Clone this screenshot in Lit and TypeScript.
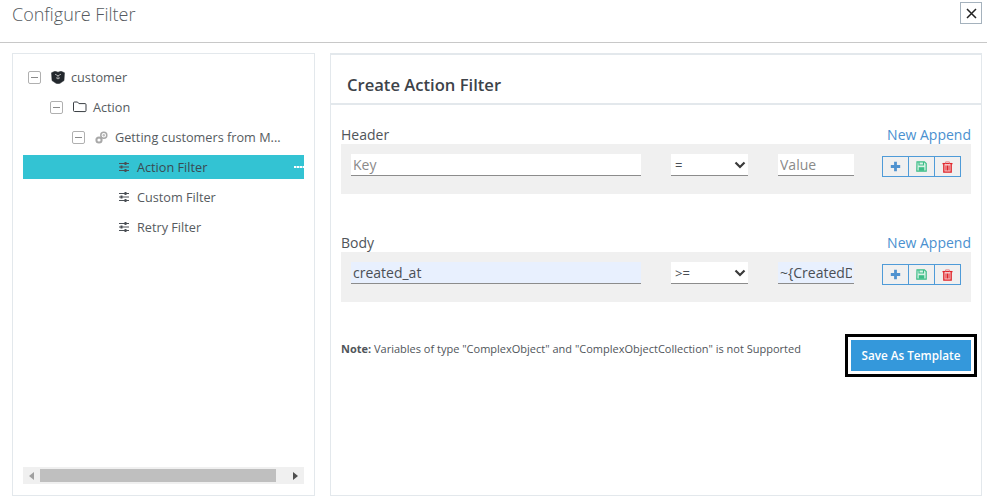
import { LitElement, html, css, svg } from "lit";
import { customElement } from "lit/decorators.js";

const sliders = svg`<svg class="ico" width="10" height="10" viewBox="0 0 10 10"><g fill="none" stroke="currentColor"><path d="M0 1.500h10M0 5h10M0 8.500h10" stroke-width="1"/><path d="M6.500 0v3M2.500 3.500v3M6.500 7v3" stroke-width="2"/></g></svg>`;

const tree = [
  { level: 0, toggle: true, icon: "box", label: "customer" },
  { level: 1, toggle: true, icon: "folder", label: "Action" },
  { level: 2, toggle: true, icon: "gears", label: "Getting customers from M..." },
  { level: 3, toggle: false, icon: "sliders", label: "Action Filter", selected: true },
  { level: 3, toggle: false, icon: "sliders", label: "Custom Filter" },
  { level: 3, toggle: false, icon: "sliders", label: "Retry Filter" },
];

function icon(name: string) {
  if (name === "box")
    return svg`<svg class="ico" width="14" height="13" viewBox="0 0 14 13"><path d="M7 1.200 10 .2 13.500 1.800 13 9.600 9 12.300 7 12.800 5 12.300 1 9.600.5 1.800 4 .2Z" fill="#23282d" stroke="#23282d" stroke-width=".5" stroke-linejoin="round"/><path d="M4 3.200 7 4.800 10 3.200M7 4.800v3M5 6.600l2 1.400 2-1.400" fill="none" stroke="#c8c8c8" stroke-width=".8"/></svg>`;
  if (name === "folder")
    return svg`<svg class="ico" width="14" height="12" viewBox="0 0 14 12"><path d="M1.500 10.500a1 1 0 0 1-1-1V2a1 1 0 0 1 1-1h3l1.400 1.600h6.100a1 1 0 0 1 1 1v6a1 1 0 0 1-1 1Z" fill="none" stroke="#3a3f44" stroke-width="1"/></svg>`;
  if (name === "gears")
    return svg`<svg class="ico" width="13" height="13" viewBox="0 0 13 13"><g fill="none" stroke="#a8a8a8"><circle cx="8.800" cy="4.200" r="3" stroke-width="1.500"/><circle cx="4" cy="9" r="2.600" stroke-width="2"/></g><circle cx="8.800" cy="4.200" r="1.200" fill="#bdbdbd"/></svg>`;
  return sliders;
}

const plus = svg`<svg width="11" height="11" viewBox="0 0 11 11"><path d="M5.500.8v9.400M.8 5.500h9.400" stroke="#4f92cf" stroke-width="2.800"/></svg>`;
const save = svg`<svg width="11" height="11" viewBox="0 0 11 11"><path d="M1 .8h7.400L10.200 2.600V10.200H.8Z" fill="#d9f2e6" stroke="#3dbd87" stroke-width="1.200"/><path d="M3 1v3h4.500V1" fill="none" stroke="#3dbd87" stroke-width="1.100"/><rect x="2.700" y="6.200" width="5.600" height="3.600" fill="#3dbd87"/></svg>`;
const trash = svg`<svg width="11" height="12" viewBox="0 0 11 12"><path d="M.5 2.600h10" stroke="#e0252b" stroke-width="1.300"/><path d="M3.600 2.400V.9h3.800v1.500" fill="none" stroke="#e8878a" stroke-width="1"/><path d="M1.800 3v8.200h7.400V3" fill="#f6c6c7" stroke="#e0252b" stroke-width="1.300"/><path d="M4 4.500v5M5.500 4.500v5M7 4.500v5" stroke="#e0252b" stroke-width="1"/></svg>`;

@customElement("app-root")
export class AppRoot extends LitElement {
  static styles = css`
    :host {
      display: block;
      width: 987px;
      height: 497px;
      overflow: hidden;
      background: #fff;
      font-family: "Open Sans", "Noto Sans", sans-serif;
      color: #4a4f55;
    }
    * { box-sizing: border-box; }
    .top {
      height: 43px;
      border-bottom: 1px solid #c8c8c8;
      display: flex;
      justify-content: space-between;
      align-items: flex-start;
      padding: 0 5px 0 12px;
    }
    .title {
      font-size: 18px;
      font-weight: 300;
      line-height: 28px;
      color: #555a60;
    }
    .close {
      margin-top: 2px;
      width: 22px;
      height: 22px;
      border: 1px solid #a5b2bd;
      background: #fff;
      display: flex;
      align-items: center;
      justify-content: center;
      padding: 0;
    }
    .main {
      display: flex;
      gap: 15px;
      padding: 10px 5px 0 12px;
      height: 453px;
      align-items: flex-start;
    }
    .left {
      width: 303px;
      flex: none;
      height: 443px;
      border: 1px solid #e3e8ec;
      padding: 11px 10px 11px 10px;
      display: flex;
      flex-direction: column;
      justify-content: space-between;
    }
    .tree { display: flex; flex-direction: column; gap: 6px; }
    .row {
      height: 24px;
      display: flex;
      align-items: center;
      font-size: 12.7px;
      color: #565b60;
      position: relative;
    }
    .row.l0 { padding-left: 5px; }
    .row.l1 { padding-left: 27px; }
    .row.l2 { padding-left: 49px; }
    .row.l3 { padding-left: 96px; }
    .row.selected { background: #33c3d3; color: #3a4a52; }
    .toggle {
      width: 13px;
      height: 13px;
      border: 1.5px solid #b0b0b0;
      border-radius: 2px;
      display: flex;
      align-items: center;
      justify-content: center;
      margin-right: 10px;
      flex: none;
    }
    .toggle::before { content: ""; width: 7px; height: 1px; background: #8a8a8a; }
    .icoWrap { width: 20px; flex: none; display: flex; align-items: center; }
    .l3 .icoWrap { width: 18px; }
    .ico { display: block; color: #4a4f55; }
    .dots {
      position: absolute;
      right: 0;
      top: 11px;
      width: 10px;
      height: 2px;
      background-image: linear-gradient(90deg, #fff 2px, rgba(255,255,255,.45) 1px);
      background-size: 3px 2px;
    }
    .hscroll {
      height: 17px;
      background: #f0f0f0;
      display: flex;
      align-items: center;
      padding: 0 6px;
    }
    .thumb { width: 236px; height: 13px; background: #bfbfbf; margin-left: 6px; }
    .arrL { width: 0; height: 0; border: 4px solid transparent; border-right: 5px solid #a0a0a0; border-left: 0; }
    .arrR { width: 0; height: 0; border: 4px solid transparent; border-left: 5px solid #4f4f4f; border-right: 0; margin-left: auto; }
    .right {
      width: 652px;
      flex: none;
      height: 443px;
      border: 1px solid #e3e8ec;
      border-top-width: 2px;
    }
    .phead {
      height: 50px;
      border-bottom: 2px solid #e3e8ec;
      padding: 19px 0 0 16px;
      font-size: 16.6px;
      font-weight: 600;
      line-height: 22px;
      color: #3d4349;
    }
    .content { padding: 19px 10px 0 10px; }
    .sechead {
      display: flex;
      justify-content: space-between;
      align-items: center;
      height: 20px;
      font-size: 14px;
      color: #50555a;
    }
    .sechead a { color: #4a90cf; text-decoration: none; }
    .sec { margin-bottom: 38px; }
    .band {
      background: #f0f0f0;
      height: 50px;
      padding: 10px 10px 0 10px;
      display: flex;
      align-items: flex-start;
    }
    input, select {
      font-family: inherit;
      font-size: 14px;
      height: 22px;
      border: 0;
      border-bottom: 1px solid #8c8c8c;
      background: #fff;
      color: #4a4f55;
      outline: none;
      padding: 0 2px;
      border-radius: 0;
      flex: none;
    }
    input::placeholder { color: #8a8a8a; opacity: 1; }
    input.filled { background: #e8f0fe; }
    .key { width: 290px; margin-right: 30px; }
    .selWrap { position: relative; width: 77px; margin-right: 30px; height: 22px; flex: none; }
    select { appearance: none; width: 100%; padding-left: 4px; font-size: 13px; display: block; }
    .chev { position: absolute; right: 2px; top: 7px; pointer-events: none; }
    .val { width: 76px; margin-right: 28px; }
    .btns { display: flex; flex: none; width: 79px; margin-top: 2px; border: 1px solid #4f9bd8; height: 21px; }
    .btn {
      flex: 1;
      display: flex;
      align-items: center;
      justify-content: center;
      border-right: 1px solid #4f9bd8;
    }
    .btn:last-child { border-right: 0; }
    .btn svg { display: block; }
    .foot {
      display: flex;
      justify-content: space-between;
      align-items: flex-start;
      margin-top: -6px;
      margin-right: -6px;
    }
    .note { font-size: 11px; color: #50555a; margin-top: 7px; line-height: 16px; }
    .note b { font-weight: 700; }
    .save {
      width: 132px;
      height: 43px;
      border: 3px solid #000;
      background: #fff;
      padding: 3px;
      display: block;
    }
    .save span {
      display: flex;
      align-items: center;
      justify-content: center;
      height: 100%;
      padding-bottom: 1px;
      background: #3498db;
      color: #fff;
      font-family: "Open Sans", sans-serif;
      font-size: 11.7px;
      font-weight: 600;
    }
  `;

  section(name: string, value: string, op: string, valueText: string) {
    return html`<div class="sec">
      <div class="sechead"><span>${name}</span><a>New Append</a></div>
      <div class="band">
        <input class="key ${value ? "filled" : ""}" placeholder="Key" .value=${value} />
        <div class="selWrap">
          <select><option>${op}</option></select>
          <svg class="chev" width="12" height="8" viewBox="0 0 12 8"><path d="M1.500 1.500 6 6l4.500-4.500" fill="none" stroke="#3a3a3a" stroke-width="2.200"/></svg>
        </div>
        <input class="val ${valueText ? "filled" : ""}" placeholder="Value" .value=${valueText} />
        <div class="btns">
          <div class="btn">${plus}</div>
          <div class="btn">${save}</div>
          <div class="btn">${trash}</div>
        </div>
      </div>
    </div>`;
  }

  render() {
    return html`
      <div class="top">
        <div class="title">Configure Filter</div>
        <button class="close" aria-label="Close">
          <svg width="11" height="11" viewBox="0 0 11 11"><path d="M1 1l9 9M10 1l-9 9" stroke="#222" stroke-width="1.500"/></svg>
        </button>
      </div>
      <div class="main">
        <div class="left">
          <div class="tree">
            ${tree.map(
              (r) => html`<div class="row l${r.level} ${r.selected ? "selected" : ""}">
                ${r.toggle ? html`<span class="toggle"></span>` : ""}
                <span class="icoWrap">${icon(r.icon)}</span>
                <span>${r.label}</span>
                ${r.selected ? html`<span class="dots"></span>` : ""}
              </div>`
            )}
          </div>
          <div class="hscroll">
            <span class="arrL"></span>
            <span class="thumb"></span>
            <span class="arrR"></span>
          </div>
        </div>
        <div class="right">
          <div class="phead">Create Action Filter</div>
          <div class="content">
            ${this.section("Header", "", "=", "")}
            ${this.section("Body", "created_at", ">=", "~{CreatedDate}")}
            <div class="foot">
              <div class="note"><b>Note:</b> Variables of type "ComplexObject" and "ComplexObjectCollection" is not Supported</div>
              <button class="save"><span>Save As Template</span></button>
            </div>
          </div>
        </div>
      </div>
    `;
  }
}
